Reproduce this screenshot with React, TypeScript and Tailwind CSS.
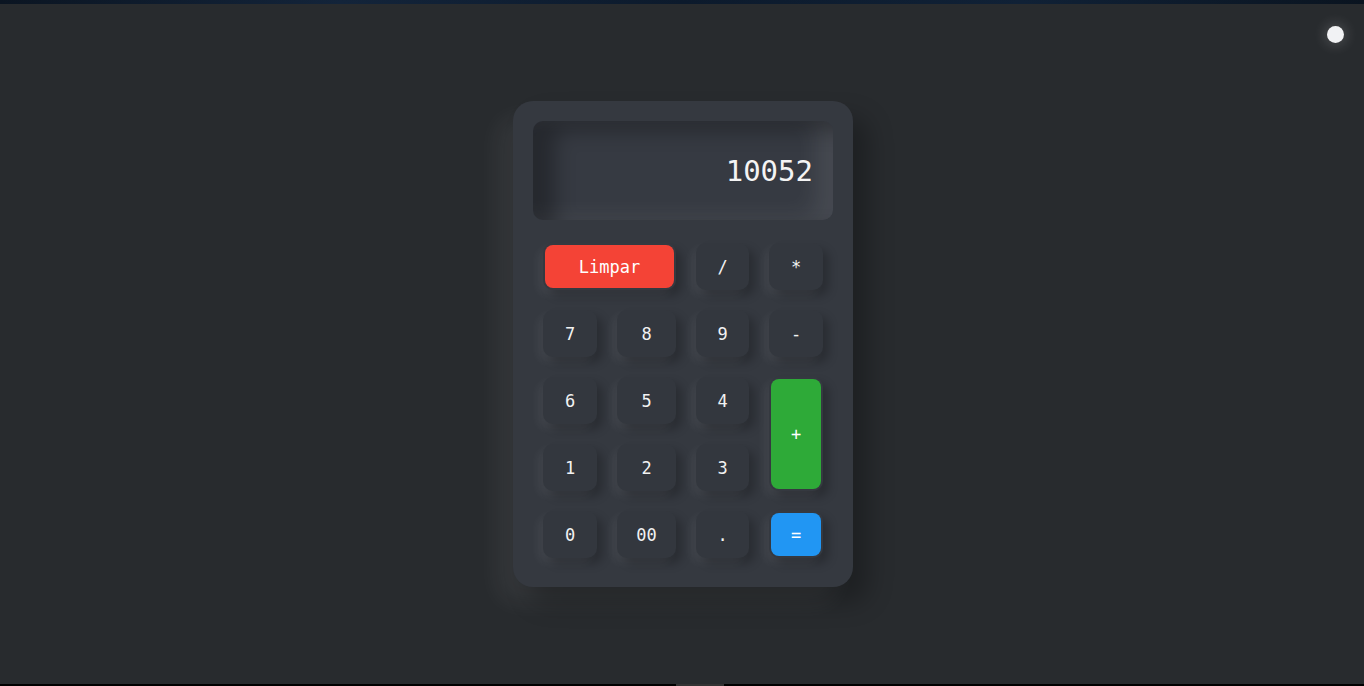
import React from "react";

const mono = { fontFamily: '"DejaVu Sans Mono", "Liberation Mono", monospace' };

const sh = "shadow-[6px_6px_10px_rgba(0,0,0,0.22),-5px_5px_10px_rgba(255,255,255,0.06)]";

function Key({ label, w }: { label: string; w: string }) {
  return (
    <div
      className={`${w} h-[47px] rounded-[10px] bg-[#33373e] flex items-center justify-center pt-[2px] text-[17px] text-[#f2f2f2] shadow-[6px_6px_10px_rgba(0,0,0,0.22),-5px_5px_10px_rgba(255,255,255,0.06)]`}
    >
      {label}
    </div>
  );
}

export default function App() {
  return (
    <div className="w-[1364px] h-[686px] bg-[#282b2e] flex flex-col overflow-hidden" style={mono}>
      <div className="h-[4px] w-full bg-[linear-gradient(90deg,#0b1522,#13243a_25%,#0c1a2c_50%,#102136_75%,#0a1420)]" />
      <div className="relative flex-1 flex items-center justify-center">
        <div className="absolute right-[20px] top-[22px] w-[17px] h-[17px] rounded-full bg-[#f1f2f4] shadow-[0_0_12px_4px_rgba(255,255,255,0.12)]" />
        <div className="w-[340px] h-[486px] rounded-[20px] bg-[#353940] px-[20px] pt-[20px] shadow-[16px_16px_24px_rgba(0,0,0,0.25),-16px_16px_24px_rgba(255,255,255,0.06)] ml-[2px]">
          <div className="h-[99px] rounded-[10px] bg-[#363a42] flex items-center justify-end pr-[20px] pt-[2px] text-[29px] text-[#f4f4f4] shadow-[inset_22px_10px_20px_rgba(0,0,0,0.3),inset_-18px_-4px_22px_rgba(255,255,255,0.08)]">
            10052
          </div>
          <div className="mt-[23px] px-[10px] grid grid-cols-[54px_59px_53px_54px] grid-rows-[47px_47px_47px_47px_47px] gap-x-[20px] gap-y-[20px]">
            <div className={`col-span-2 p-[2px] rounded-[10px] ${sh}`}>
              <div className="h-full rounded-[8px] bg-[#f44336] flex items-center justify-center pt-[2px] text-[17px] text-white">
                Limpar
              </div>
            </div>
            <Key label="/" w="w-[53px]" />
            <Key label="*" w="w-[54px]" />
            <Key label="7" w="w-[54px]" />
            <Key label="8" w="w-[59px]" />
            <Key label="9" w="w-[53px]" />
            <Key label="-" w="w-[54px]" />
            <Key label="6" w="w-[54px]" />
            <Key label="5" w="w-[59px]" />
            <Key label="4" w="w-[53px]" />
            <div className={`row-span-2 p-[2px] rounded-[10px] ${sh}`}>
              <div className="h-full rounded-[8px] bg-[#2eaa38] flex items-center justify-center pt-[2px] text-[17px] text-white">
                +
              </div>
            </div>
            <Key label="1" w="w-[54px]" />
            <Key label="2" w="w-[59px]" />
            <Key label="3" w="w-[53px]" />
            <Key label="0" w="w-[54px]" />
            <Key label="00" w="w-[59px]" />
            <Key label="." w="w-[53px]" />
            <div className={`p-[2px] rounded-[10px] ${sh}`}>
              <div className="h-full rounded-[8px] bg-[#2196f3] flex items-center justify-center pt-[2px] text-[17px] text-white">
                =
              </div>
            </div>
          </div>
        </div>
      </div>
      <div className="h-[2px] w-full bg-black flex justify-center">
        <div className="w-[48px] h-full bg-[#333333] ml-[36px]" />
      </div>
    </div>
  );
}
